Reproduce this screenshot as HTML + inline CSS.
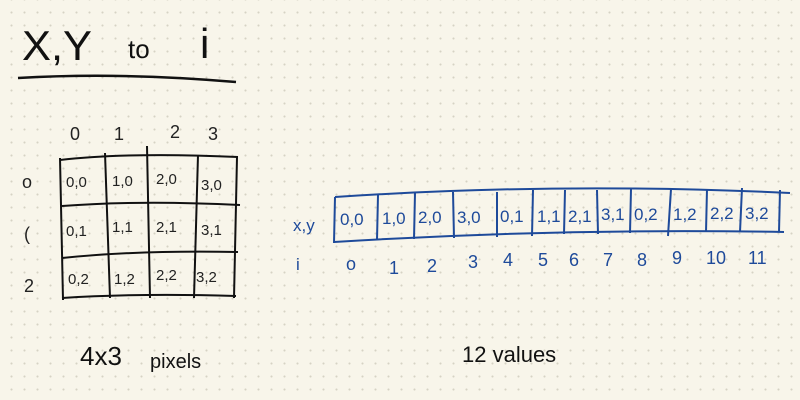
<!DOCTYPE html><html><head><style>
html,body{margin:0;padding:0;}
body{width:800px;height:400px;overflow:hidden;background:#f8f5ea;
background-image:radial-gradient(circle,#d6d2c4 0.9px,transparent 1.2px);background-size:13px 13px;background-position:5px 6px;}
svg{position:absolute;left:0;top:0}
text{font-family:"Liberation Sans",sans-serif;}
</style></head><body>
<svg width="800" height="400" viewBox="0 0 800 400">
<g fill="#111" font-size="42" font-weight="300">
<text x="22" y="60" textLength="70" lengthAdjust="spacingAndGlyphs">X,Y</text>
<text x="128" y="58" font-size="26">to</text>
<text x="200" y="58">i</text>
</g>
<path d="M18 78 Q120 72 236 82" stroke="#111" stroke-width="2.5" fill="none"/>
<g fill="#222" font-size="18">
<text x="70" y="140">0</text><text x="114" y="140">1</text><text x="170" y="138">2</text><text x="208" y="140">3</text>
<text x="22" y="188">o</text><text x="24" y="240">(</text><text x="24" y="292">2</text>
</g>
<g stroke="#111" stroke-width="2" fill="none">
<path d="M60 160 Q130 152 238 157"/><path d="M62 206 Q140 200 240 205"/><path d="M62 258 Q140 250 238 252"/><path d="M62 298 Q140 293 236 296"/>
<path d="M60 158 L63 300"/><path d="M105 153 L110 298"/><path d="M147 146 L150 298"/><path d="M198 155 L194 298"/><path d="M237 157 L234 298"/>
</g>
<g fill="#222" font-size="15">
<text x="66" y="187">0,0</text><text x="112" y="186">1,0</text><text x="156" y="184">2,0</text><text x="201" y="190">3,0</text>
<text x="66" y="236">0,1</text><text x="112" y="232">1,1</text><text x="156" y="232">2,1</text><text x="201" y="235">3,1</text>
<text x="68" y="284">0,2</text><text x="114" y="284">1,2</text><text x="156" y="280">2,2</text><text x="196" y="282">3,2</text>
</g>
<g stroke="#1e4a9a" stroke-width="2" fill="none">
<path d="M335 197 Q560 182 790 193"/><path d="M334 242 Q560 228 784 232"/>
<path d="M335 197 L334 243"/><path d="M378 195 L377 240"/><path d="M415 193 L414 239"/><path d="M453 192 L454 238"/><path d="M497 192 L497 237"/><path d="M533 190 L532 236"/><path d="M565 190 L564 234"/><path d="M597 190 L598 234"/><path d="M631 189 L630 233"/><path d="M671 189 L668 236"/><path d="M707 189 L706 232"/><path d="M742 188 L740 232"/><path d="M780 190 L779 232"/>
</g>
<g fill="#1e4a9a" font-size="17">
<text x="293" y="231">x,y</text>
<text x="340" y="225">0,0</text><text x="382" y="224">1,0</text><text x="418" y="223">2,0</text><text x="457" y="223">3,0</text><text x="500" y="222">0,1</text><text x="537" y="222">1,1</text><text x="568" y="222">2,1</text><text x="601" y="220">3,1</text><text x="634" y="220">0,2</text><text x="673" y="220">1,2</text><text x="710" y="219">2,2</text><text x="745" y="219">3,2</text>
<text x="296" y="270">i</text>
<g font-size="18"><text x="346" y="270">o</text><text x="389" y="274">1</text><text x="427" y="272">2</text><text x="468" y="268">3</text><text x="503" y="266">4</text><text x="538" y="266">5</text><text x="569" y="266">6</text><text x="603" y="266">7</text><text x="637" y="266">8</text><text x="672" y="264">9</text><text x="706" y="264">10</text><text x="748" y="264">11</text></g>
</g>
<g fill="#111">
<text x="80" y="365" font-size="26">4x3</text><text x="150" y="368" font-size="20">pixels</text>
<text x="462" y="362" font-size="22">12 values</text>
</g>
</svg>
</body></html>
